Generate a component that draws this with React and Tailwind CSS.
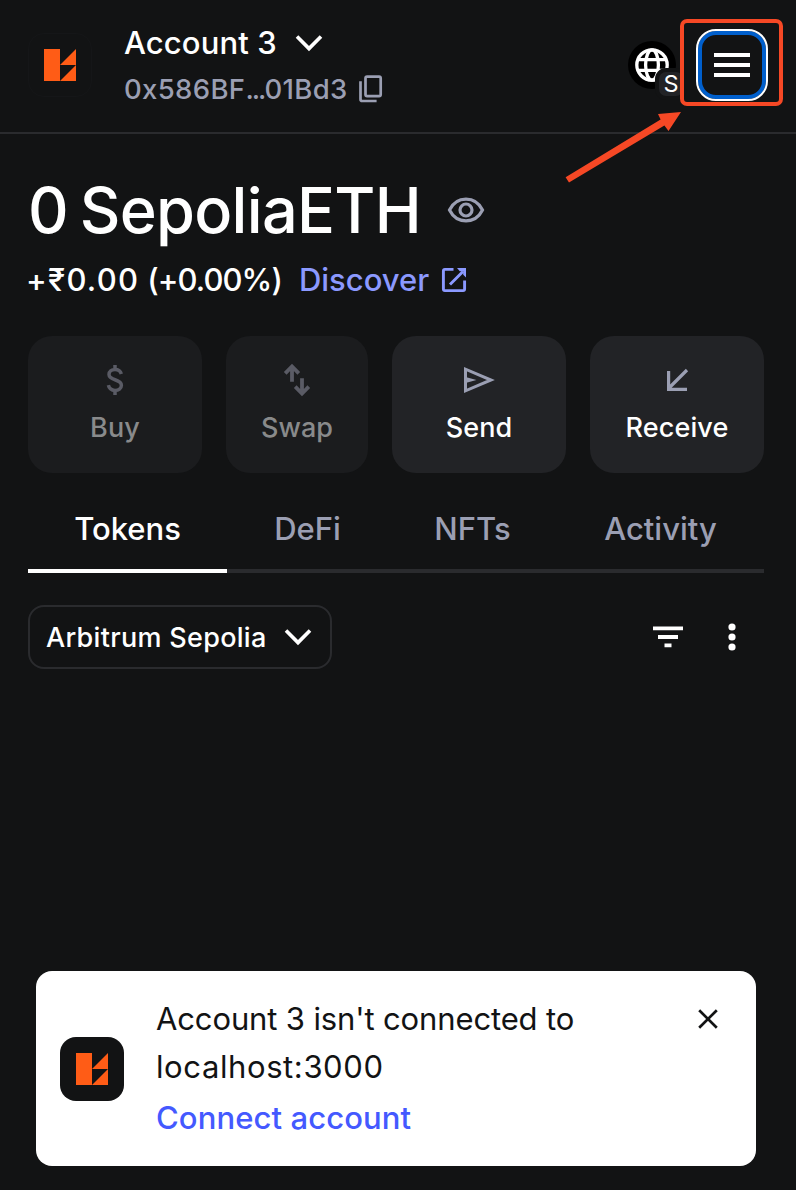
import React from "react";

function Logo() {
  return (
    <svg width="32" height="32" viewBox="0 0 32 32" fill="#ff5c16">
      <path d="M0 0H16V32H0ZM32 0V16H16ZM32 16V32H16Z" />
    </svg>
  );
}

function Chevron() {
  return (
    <svg width="28" height="18" viewBox="0 0 28 18" fill="none" stroke="currentColor" strokeWidth="3.6">
      <path d="M2 2.6 14 14.6 26 2.6" />
    </svg>
  );
}

function CopyIcon() {
  return (
    <svg width="24" height="28" viewBox="0 0 24 28" fill="none" stroke="currentColor" strokeWidth="2.7">
      <rect x="6.5" y="1.7" width="15.2" height="19.4" rx="1.6" />
      <path d="M1.5 6.3V24.2Q1.5 26 3.3 26H17.6" />
    </svg>
  );
}

function Globe() {
  return (
    <svg width="34" height="34" viewBox="0 0 34 34" fill="none" stroke="#fff" strokeWidth="3.3">
      <circle cx="17" cy="17" r="15.2" />
      <ellipse cx="17" cy="17" rx="6.4" ry="15.2" />
      <path d="M3 11.7H31M3 22.3H31" />
    </svg>
  );
}

function ActionButton({ label, disabled, className, children }) {
  return (
    <button
      className={`flex h-[137px] flex-col items-center rounded-3xl pt-6 ${
        disabled ? "bg-[#1b1c1e] text-[#898a8b]" : "bg-[#222326] text-white"
      } ${className}`}
    >
      <span className={`flex h-10 items-center ${disabled ? "text-[#5a5b65]" : "text-[#9b9fb3]"}`}>{children}</span>
      <span className="mt-2 text-[27px] leading-[40px] font-medium tracking-[0.1px] whitespace-nowrap">{label}</span>
    </button>
  );
}

export default function App() {
  return (
    <div className="relative flex h-[1190px] w-[796px] flex-col overflow-hidden bg-[#121314] font-['Inter',sans-serif] text-white">
      <header className="flex h-[134px] shrink-0 items-start border-b-2 border-[#2a2b2e] pt-5 pr-7 pl-7">
        <div className="mt-[13px] flex size-16 items-center justify-center rounded-2xl border border-[#151618]">
          <Logo />
        </div>
        <div className="ml-8">
          <div className="flex h-[46px] items-center">
            <span className="text-[31px] leading-[46px] font-medium tracking-[0.1px]">Account 3</span>
            <span className="ml-[18px]"><Chevron /></span>
          </div>
          <div className="flex h-[46px] items-center text-[#9b9fb3]">
            <span className="text-[27.5px] leading-[46px] font-medium tracking-[0.35px]">0x586BF<span className="tracking-[-2px]">...</span>01Bd3</span>
            <span className="ml-[11px]"><CopyIcon /></span>
          </div>
        </div>
        <div className="ml-auto flex items-start">
          <div className="relative mt-[21px] mr-5 flex size-12 items-center justify-center rounded-full bg-black">
            <Globe />
            <span className="absolute top-[27px] left-[27px] flex h-8 w-[32px] items-center justify-center rounded-[11px] border-4 border-[#121314] bg-[#222326] text-[23.5px] leading-6">S</span>
          </div>
          <button className="mt-[9px] flex size-[72px] flex-col items-center justify-center gap-1.5 rounded-[20px] border-2 border-white ring-4 ring-[#005fcc] ring-inset">
            <span className="h-1 w-9 bg-white" />
            <span className="h-1 w-9 bg-white" />
            <span className="h-1 w-9 bg-white" />
          </button>
        </div>
      </header>

      <div className="absolute top-[19px] left-[680px] h-[87px] w-[103px] rounded-[7px] border-4 border-[#f64825]" />
      <svg className="absolute top-[106px] left-[560px]" width="128" height="82" viewBox="560 106 128 82" fill="#f64825">
        <path d="M681 112 658 114 660.6 119.4 565.6 177.2 569 182.6 664.4 125.6 668.5 131Z" />
      </svg>

      <main className="px-7">
        <div className="mt-[36px] flex h-20 items-center">
          <span className="text-[63px] leading-[80px] font-medium">0</span>
          <span className="ml-[11px] text-[63px] leading-[80px] font-medium tracking-[-0.7px]">SepoliaETH</span>
          <svg className="ml-[26px]" width="38" height="28" viewBox="0 0 38 28" fill="none" stroke="#9b9fb3" strokeWidth="3.2">
            <path d="M2.5 14C6 7 11.8 3.2 19 3.2S32 7 35.5 14C32 21 26.2 24.8 19 24.8S6 21 2.5 14Z" />
            <circle cx="19" cy="14" r="6" />
          </svg>
        </div>
        <div className="mt-[6px] flex h-12 items-center text-[31px] leading-[48px] font-medium">
          <span className="-ml-0.5 tracking-[1.3px]">+₹0.00</span>
          <span className="ml-2 tracking-[-0.95px]">(+0.00%)</span>
          <span className="ml-[17px] text-[#8b99ff]">Discover</span>
          <svg className="ml-3" width="26" height="26" viewBox="0 0 26 26" fill="none" stroke="#8b99ff" strokeWidth="2.9">
            <path d="M12.5 2.4H3.9Q2.4 2.4 2.4 3.9V22.1Q2.4 23.6 3.9 23.6H22.1Q23.6 23.6 23.6 22.1V13.5M9 17.5 22 4.5" />
            <path d="M16 1H25V10.500L22.2 7.7V4.200H18.8Z" fill="#8b99ff" stroke="none" />
          </svg>
        </div>

        <div className="mt-8 flex gap-6">
          <ActionButton label="Buy" disabled className="w-[174px]">
            <svg width="18" height="30" viewBox="0 0 18 30" fill="none" stroke="currentColor" strokeWidth="3.5">
              <path d="M9 0V4.5M9 25.5V30M15.3 9C14.5 6 12.2 4.6 9 4.6 5.5 4.6 3 6.5 3 9.6 3 16 15.4 13.5 15.4 20.3 15.4 23.6 12.5 25.4 9 25.4 5.5 25.4 3.1 23.5 2.4 20.2" />
            </svg>
          </ActionButton>
          <ActionButton label="Swap" disabled className="w-[142px]">
            <svg width="28" height="34" viewBox="0 0 28 34" fill="none" stroke="currentColor" strokeWidth="3.8">
              <path d="M9 18.8V3.5M2.2 10.3 9 3.5 15.8 10.3M19 15.2V30.5M12.2 23.7 19 30.5 25.8 23.7" />
            </svg>
          </ActionButton>
          <ActionButton label="Send" className="w-[174px]">
            <svg width="32" height="28" viewBox="0 0 32 28" fill="none" stroke="currentColor" strokeWidth="3">
              <path d="M2.5 3.2V24.8L28 14Z" />
              <path d="M2.5 11 13.5 14 2.5 17Z" fill="currentColor" stroke="none" />
            </svg>
          </ActionButton>
          <ActionButton label="Receive" className="w-[174px]">
            <svg width="24" height="24" viewBox="0 0 24 24" fill="none" stroke="currentColor" strokeWidth="3.2">
              <path d="M22 2 4 20M3.6 3V21.4H22" />
            </svg>
          </ActionButton>
        </div>

        <nav className="mt-6 flex h-[76px] text-center text-[31px] leading-[64px] font-medium text-[#9b9fb3]">
          <button className="w-[199px] border-b-4 border-white pb-2 text-white">Tokens</button>
          <button className="w-[161px] border-b-4 border-[#2a2b2e] pb-2">DeFi</button>
          <button className="w-[169px] border-b-4 border-[#2a2b2e] pb-2">NFTs</button>
          <button className="w-[207px] border-b-4 border-[#2a2b2e] pb-2">Activity</button>
        </nav>

        <div className="mt-8 flex h-16 items-center">
          <button className="flex h-16 w-[304px] items-center justify-between rounded-2xl border-2 border-[#2a2b2e] pr-[18px] pl-4">
            <span className="pt-px text-[27px] leading-10 font-medium tracking-[0.3px] whitespace-nowrap">Arbitrum Sepolia</span>
            <Chevron />
          </button>
          <svg className="ml-auto" width="32" height="32" viewBox="0 0 32 32" fill="#fff">
            <path d="M1 5.6H31V9.3H1ZM6 14.1H26V17.9H6ZM12.5 22.6H19.5V26.3H12.5Z" />
          </svg>
          <svg className="mr-5 ml-8" width="32" height="32" viewBox="0 0 32 32" fill="#fff">
            <circle cx="16" cy="6" r="3.6" />
            <circle cx="16" cy="16" r="3.6" />
            <circle cx="16" cy="26" r="3.6" />
          </svg>
        </div>
      </main>

      <aside className="mt-auto mb-6 ml-9 flex h-[195px] w-[720px] items-start rounded-2xl bg-white pl-6 text-[#121314]">
        <div className="mt-[66px] flex size-16 items-center justify-center rounded-2xl bg-[#121314]">
          <Logo />
        </div>
        <div className="mt-6 ml-8 text-[31px] leading-[48px]">
          <p className="tracking-[-0.13px]">Account 3 isn't connected to</p>
          <p className="tracking-[0.6px]">localhost:3000</p>
          <p className="mt-[3px] font-medium tracking-[0.1px] text-[#4459ff]">Connect account</p>
        </div>
        <svg className="mt-[38px] mr-[38px] ml-auto" width="20" height="20" viewBox="0 0 20 20" fill="none" stroke="currentColor" strokeWidth="2.7">
          <path d="M1.2 1.2 18.8 18.8M18.8 1.2 1.2 18.8" />
        </svg>
      </aside>
    </div>
  );
}
